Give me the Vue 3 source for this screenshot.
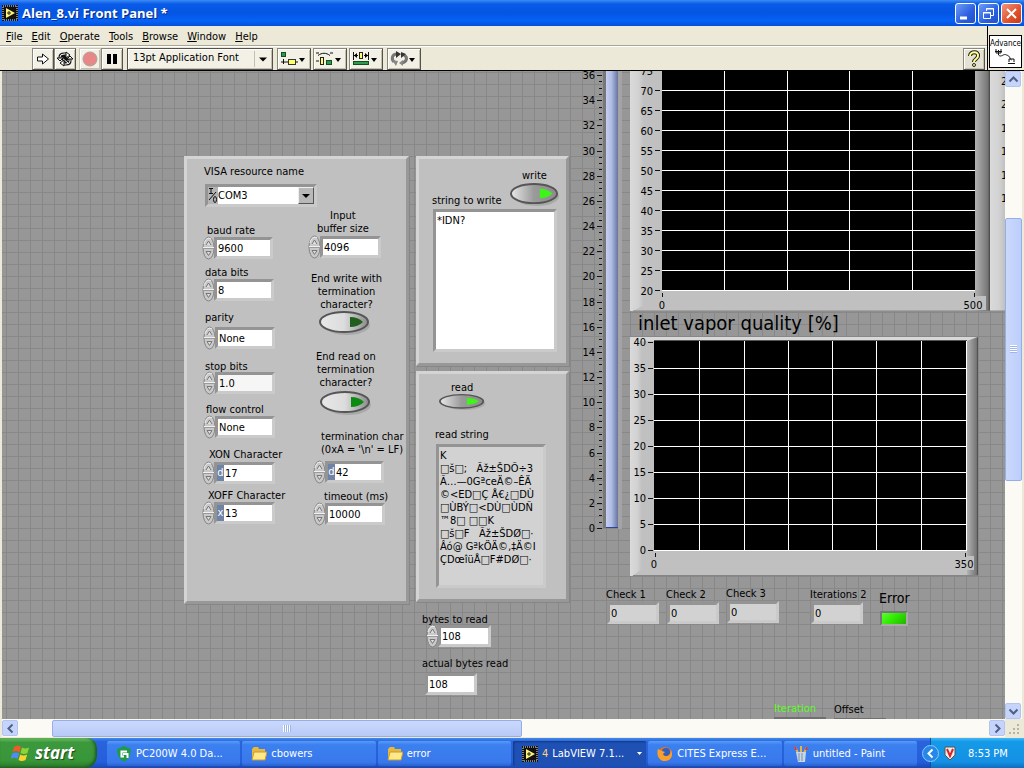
<script setup>
import { ref } from 'vue'

const menus = ['File', 'Edit', 'Operate', 'Tools', 'Browse', 'Window', 'Help']

/* Front panel coordinates of the canvas' visible top left corner */
const scroll = { x: 2, y: 71 }
const at = (o) => ({
  left: o.x - scroll.x + 'px',
  top: o.y - scroll.y + 'px',
  ...(o.w ? { width: o.w + 'px' } : {}),
  ...(o.h ? { height: o.h + 'px' } : {}),
})

const panels = [
  { x: 184, y: 156, w: 225, h: 448 },
  { x: 416, y: 156, w: 153, h: 210 },
  { x: 416, y: 371, w: 153, h: 231 },
]

const labels = [
  { for: 'visa', text: 'VISA resource name', x: 204, y: 165 },
  { for: 'buffer', text: 'Input\nbuffer size', x: 317, y: 209, center: true },
  { for: 'baud', text: 'baud rate', x: 207, y: 224 },
  { for: 'databits', text: 'data bits', x: 205, y: 266 },
  { for: 'endwrite', text: 'End write with\ntermination\ncharacter?', x: 311, y: 272, center: true },
  { for: 'parity', text: 'parity', x: 205, y: 311 },
  { for: 'endread', text: 'End read on\ntermination\ncharacter?', x: 316, y: 350, center: true },
  { for: 'stopbits', text: 'stop bits', x: 205, y: 360 },
  { for: 'flow', text: 'flow control', x: 206, y: 403 },
  { for: 'termchar', text: "termination char\n(0xA = '\\n' = LF)", x: 321, y: 430 },
  { for: 'xon', text: 'XON Character', x: 209, y: 448 },
  { for: 'xoff', text: 'XOFF Character', x: 208, y: 489 },
  { for: 'timeout', text: 'timeout (ms)', x: 324, y: 490 },
  { for: 'write', text: 'write', x: 522, y: 169 },
  { for: 'towrite', text: 'string to write', x: 432, y: 194 },
  { for: 'read', text: 'read', x: 451, y: 381 },
  { for: 'readstring', text: 'read string', x: 435, y: 428 },
  { for: 'bytes', text: 'bytes to read', x: 422, y: 613 },
  { for: 'actual', text: 'actual bytes read', x: 422, y: 657 },
  { for: 'check1', text: 'Check 1', x: 606, y: 588 },
  { for: 'check2', text: 'Check 2', x: 666, y: 588 },
  { for: 'check3', text: 'Check 3', x: 726, y: 587 },
  { for: 'iter2', text: 'Iterations 2', x: 810, y: 588 },
]

const controls = ref([
  { id: 'baud', value: '9600', x: 202, y: 236, w: 71, spin: true },
  { id: 'buffer', value: '4096', x: 308, y: 235, w: 73, spin: true },
  { id: 'databits', value: '8', x: 202, y: 278, w: 72, spin: true },
  { id: 'parity', value: 'None', x: 203, y: 326, w: 72, spin: true },
  { id: 'stopbits', value: '1.0', x: 203, y: 371, w: 72, spin: true },
  { id: 'flow', value: 'None', x: 203, y: 415, w: 72, spin: true },
  { id: 'xon', value: '17', x: 202, y: 461, w: 73, spin: true, radix: 'd' },
  { id: 'xoff', value: '13', x: 202, y: 501, w: 73, spin: true, radix: 'x' },
  { id: 'termchar', value: '42', x: 313, y: 460, w: 71, spin: true, radix: 'd' },
  { id: 'timeout', value: '10000', x: 313, y: 502, w: 72, spin: true },
  { id: 'bytes', value: '108', x: 426, y: 624, w: 65, spin: true },
  { id: 'actual', value: '108', x: 425, y: 672, w: 52 },
  { id: 'check1', value: '0', x: 607, y: 601, w: 52, out: true },
  { id: 'check2', value: '0', x: 667, y: 601, w: 52, out: true },
  { id: 'check3', value: '0', x: 727, y: 600, w: 52, out: true },
  { id: 'iter2', value: '0', x: 811, y: 601, w: 52, out: true },
])

const toggles = [
  { id: 'endwrite', x: 319, y: 311, w: 52, h: 24, light: '#1f5e1c', face: '#dcdcdc' },
  { id: 'endread', x: 320, y: 391, w: 52, h: 24, light: '#0d8a12', face: '#dcdcdc' },
  { id: 'write', x: 510, y: 183, w: 50, h: 23, light: '#3df516', face: '#9a9a9a' },
  { id: 'read', x: 439, y: 394, w: 47, h: 16, light: '#3df516', face: '#9a9a9a' },
]

const toWrite = ref('*IDN?')
const readString = [
  'K',
  '□š□;   Ãž±ŠDÕ÷3',
  'Ã…—0GªceÄ©–ÊÄ',
  '©<ED□Ç Å€¿□DÙ',
  '□ÙBÝ□<DÙ□ÙDÑ',
  '™8□ □□K',
  '□š□F   Ãž±ŠDØ□·',
  'Âó@ GªkÖÄ©‚‡Ä©I',
  'ÇDœîüÅ□F#DØ□·',
].join('\n')

/* Level scale: one major mark per two units, quarters in between */
const levelY = (v) => 457 - Math.round(v * 12.58)
const majors = Array.from({ length: 19 }, (_, i) => i * 2)
const minors = Array.from({ length: 73 }, (_, i) => i / 2).filter((v) => v % 2)

const chart1 = Array.from({ length: 12 }, (_, i) => ({ v: 20 + i * 5, y: 219 - i * 20 }))
const chart2 = Array.from({ length: 9 }, (_, i) => ({ v: i * 5, y: 213 - i * 26 }))
const edgeScale = ['2', '2', '1', '1', '1', '1']

const tasks = [
  { icon: 'pc', text: 'PC200W 4.0 Da...' },
  { icon: 'folder', text: 'cbowers' },
  { icon: 'folder', text: 'error' },
  { icon: 'labview', text: 'LabVIEW 7.1...', count: 4, active: true },
  { icon: 'firefox', text: 'CITES Express E...' },
  { icon: 'paint', text: 'untitled - Paint' },
]
</script>

<template>
  <div class="desktop">
    <header class="titlebar">
      <svg class="lv" width="16" height="16" viewBox="0 0 16 16">
        <rect width="16" height="16" fill="#111" />
        <rect x="1" y="1" width="14" height="14" fill="none" stroke="#eee" stroke-dasharray="1 1" />
        <path d="M4 3l9 5-9 5z" fill="#fff37a" /><path d="M5 8h4M7 6v4" stroke="#222" />
      </svg>
      <h1>Alen_8.vi Front Panel *</h1>
      <div class="winbtns">
        <button aria-label="Minimize"><svg width="19" height="19"><path d="M4 14h7" stroke="#fff" stroke-width="3" /></svg></button>
        <button aria-label="Restore"><svg width="19" height="19" fill="none" stroke="#fff"><path d="M7.500 7V4.500h7v7H12M7 5h8" /><path d="M4.500 8.500h7v6h-7zM4 9h8" /></svg></button>
        <button class="close" aria-label="Close"><svg width="19" height="19"><path d="M5 5l9 9M14 5l-9 9" stroke="#fff" stroke-width="2" /></svg></button>
      </div>
    </header>

    <div class="bars">
      <div class="barcol">
        <nav class="menubar">
          <button v-for="m in menus" :key="m"><u>{{ m[0] }}</u>{{ m.slice(1) }}</button>
        </nav>
        <div class="toolbar">
          <button class="tb" aria-label="Run"><svg width="16" height="16" viewBox="0 0 16 16"><path d="M2.500 6h5V3l6 5-6 5v-3h-5z" fill="#fff" stroke="#111" /></svg></button>
          <button class="tb" aria-label="Run continuously"><svg width="18" height="16" viewBox="0 0 18 16" fill="none"><path d="M4 8V6q0-3 4-3h3M14 8v2q0 3-4 3H7M6 7l6 5M6 4l6 5" stroke="#111" stroke-width="3" /><path d="M4 8V6q0-3 4-3h3M14 8v2q0 3-4 3H7M6 7l6 5" stroke="#fff" /><path d="M10 1l4 3-4 3zM8 9l-4 3 4 3zM1 7h6l-3 3zM11 8h6l-3-3z" fill="#fff" stroke="#111" /></svg></button>
          <button class="tb off gap3" aria-label="Abort"><svg width="18" height="18"><circle cx="9" cy="9" r="7" fill="#e88787" stroke="#a9a49a" /></svg></button>
          <button class="tb" aria-label="Pause"><svg width="16" height="16"><path d="M3 3h4v10H3zM9 3h4v10H9z" fill="#000" /></svg></button>
          <div class="fontsel gap4">
            <select aria-label="Text settings"><option>13pt Application Font</option></select>
            <svg width="16" height="16"><path d="M4 6.500h8L8 10.500z" fill="#000" /></svg>
          </div>
          <button class="tb wide" aria-label="Align objects"><svg width="30" height="16"><rect x="2.500" y="1.500" width="4" height="4" fill="#2c9a48" stroke="#174c22" /><path d="M4.500 8v5M2 11h5M7 11h3M16 11h3" stroke="#111" /><rect x="9.500" y="8.500" width="7" height="5" fill="#ffff6a" stroke="#333" /><path d="M20 7h6l-3 4z" /></svg></button>
          <button class="tb wide" aria-label="Distribute objects"><svg width="30" height="16"><path d="M3 4.500c4-3 8-3 12 0M1 10h3M1 2h3M15 2h3" fill="none" stroke="#111" /><rect x="5.500" y="6.500" width="3" height="7" fill="#ffff6a" stroke="#222" /><rect x="11.500" y="9.500" width="5" height="4" fill="#2c9a48" stroke="#174c22" /><path d="M20 7h6l-3 4z" /></svg></button>
          <button class="tb wide" aria-label="Resize objects"><svg width="30" height="16"><path d="M2.500 1v8M17.500 1v8M3 4.500h4M13 4.500h4" stroke="#111" /><path d="M3 4.500l3-2.500v5zM17 4.500L14 2v5z" /><rect x="8.500" y="1.500" width="3" height="6" fill="#ffff6a" stroke="#222" /><rect x="2.500" y="10.500" width="15" height="3" fill="#2c9a48" stroke="#174c22" /><path d="M20 7h6l-3 4z" /></svg></button>
          <button class="tb wide gap4" aria-label="Reorder"><svg width="30" height="16"><g fill="none" stroke="#777" stroke-width="3"><path d="M8 3C3 3 2 8 5 11M13 12c5-1 6-6 2-8" /></g><path d="M7 0l5 3-5 4zM12 1l5 2-5 4z" fill="#333" /><path d="M3 9l6 1-2 5zM14 9v6l-4-3z" fill="#888" /><path d="M20 7h6l-3 4z" /></svg></button>
          <button class="tb help" aria-label="Context help"><svg width="16" height="18" viewBox="0 0 16 18" fill="none"><path d="M4 6c0-5 9-5 8 0 0 3-4 3-4 6" stroke="#222" stroke-width="4" /><path d="M4 6c0-5 9-5 8 0 0 3-4 3-4 6" stroke="#ffff8c" stroke-width="2" /><circle cx="8" cy="15" r="1.500" fill="#ffff8c" stroke="#222" /></svg></button>
        </div>
      </div>
      <div class="viicon">
        <svg width="33" height="33" viewBox="0 0 33 33">
          <rect x=".5" y=".5" width="32" height="32" fill="#fff" stroke="#000" />
          <text x="1" y="11" class="tiny">Advance</text>
          <g fill="none" stroke="#111"><path d="M6 16.500h7M7 14v4h5v-4M9.500 15v5c3 3 5-2 8 0 4 1 3 4 5 5M19 28.500h7M20 27v-3h5v3" /></g>
        </svg>
      </div>
    </div>

    <main class="work">
      <div class="canvas">
        <div v-for="(p, i) in panels" :key="i" class="panel" :style="at(p)"></div>

        <label v-for="l in labels" :key="l.for" :for="l.for" class="lbl" :class="{ center: l.center }" :style="at(l)">{{ l.text }}</label>

        <div class="visa recess" :style="at({ x: 205, y: 184, w: 112, h: 23 })">
          <svg width="10" height="17" viewBox="0 0 10 17"><path d="M1 1.500h4M3 1.500v5M1 6.500h4M1 13L8 5" stroke="#111" fill="none" /><ellipse cx="7" cy="12.500" rx="1.500" ry="3" stroke="#111" fill="none" /></svg>
          <select id="visa"><option>COM3</option></select>
          <span class="drop"><svg width="14" height="14"><path d="M3 5h8l-4 4z" /></svg></span>
        </div>

        <div v-for="c in controls" :key="c.id" class="ctl" :style="at({ x: c.x, y: c.y, w: c.w })">
          <button v-if="c.spin" class="spin" :aria-label="'Step ' + c.id">
            <svg width="13" height="24" viewBox="0 0 13 24">
              <ellipse cx="6.500" cy="12" rx="5.500" ry="11" fill="#c9c9c9" stroke="#848484" />
              <path d="M2 8C3 3 6 1 9 3" stroke="#f2f2f2" fill="none" />
              <path d="M1 11.500h11" stroke="#f0f0f0" /><path d="M1 12.500h11" stroke="#9a9a9a" />
              <path d="M4 9l2.500-4 2.500 4" fill="#ddd" stroke="#777" /><path d="M4 15.500h5l-2.500 4z" fill="#ddd" stroke="#777" />
            </svg>
          </button>
          <div class="recess num" :class="{ out: c.out, plain: !c.spin, soft: c.id === 'stopbits' }">
            <span v-if="c.radix" class="radix">{{ c.radix }}</span>
            <input :id="c.id" v-model="c.value" :readonly="c.out" />
          </div>
        </div>

        <button v-for="t in toggles" :id="t.id" :key="t.id" class="toggle" :style="at(t)">
          <svg width="100%" height="100%" viewBox="0 0 52 24" preserveAspectRatio="none">
            <defs><linearGradient :id="'g' + t.id" x2="1"><stop offset="0" stop-color="#e8e8e8" /><stop offset=".5" :stop-color="t.face" /><stop offset="1" stop-color="#8c8c8c" /></linearGradient></defs>
            <ellipse cx="28" cy="14" rx="23" ry="10" fill="#999" opacity=".6" />
            <ellipse cx="25" cy="11" rx="24" ry="10" :fill="'url(#g' + t.id + ')'" stroke="#555" stroke-width="2" />
            <path d="M31 6q8 0 13 5-5 5-13 5z" :fill="t.light" />
          </svg>
        </button>

        <textarea id="towrite" v-model="toWrite" class="recess string" :style="at({ x: 433, y: 209, w: 124, h: 143 })"></textarea>
        <textarea id="readstring" class="recess string out" readonly :value="readString" :style="at({ x: 436, y: 444, w: 110, h: 144 })"></textarea>

        <svg class="item" width="50" height="466" :style="at({ x: 574, y: 71 })">
          <defs><linearGradient id="tube" x2="1"><stop offset="0" stop-color="#c5ceee" /><stop offset=".45" stop-color="#b0bce4" /><stop offset="1" stop-color="#66749e" /></linearGradient></defs>
          <rect x="29" y="0" width="3" height="457" fill="#777" /><rect x="44" y="0" width="4" height="458" fill="#a4a4a4" />
          <rect x="32" y="0" width="12" height="457" fill="url(#tube)" /><rect x="32" y="456" width="12" height="1" fill="#2b449c" />
          <g stroke="#111"><path v-for="v in majors" :key="v" :d="`M23 ${levelY(v)}.5h5`" /><path v-for="v in minors" :key="v" :d="`M25 ${levelY(v)}.5h3`" /></g>
          <text v-for="v in majors" :key="v" x="21" :y="levelY(v) + 4" text-anchor="end">{{ v }}</text>
        </svg>

        <svg class="item" width="375" height="241" :style="at({ x: 630, y: 71 })">
          <defs>
            <linearGradient id="lite" x2="1"><stop offset="0" stop-color="#dadada" /><stop offset=".6" stop-color="#d2d2d2" /><stop offset="1" stop-color="#c0c0c0" /></linearGradient>
            <linearGradient id="dim" x2="1"><stop offset="0" stop-color="#b2b2b2" /><stop offset=".85" stop-color="#777" /><stop offset="1" stop-color="#444" /></linearGradient>
          </defs>
          <rect width="360" height="240" fill="#c0c0c0" /><path d="M0 0h14v234L3 240H0z" fill="url(#lite)" />
          <rect x="345" width="15" height="240" fill="url(#dim)" /><rect x="330" y="225" width="26" height="14" fill="#c0c0c0" />
          <rect x="360" width="15" height="240" fill="url(#lite)" /><path d="M3 240h372" stroke="#858585" />
          <rect x="32" width="313" height="219" fill="#000" />
          <g stroke="#fff"><path v-for="t in chart1" :key="t.v" :d="`M32 ${t.y}.5h313`" /><path v-for="x in [94, 157, 219, 282]" :key="x" :d="`M${x}.5 0v219`" /></g>
          <path v-for="t in chart1" :key="t.v" :d="`M25 ${t.y}.5h5`" stroke="#111" />
          <text v-for="t in chart1" :key="t.v" x="23" :y="t.y + 5" text-anchor="end">{{ t.v }}</text>
          <path d="M32.500 222v4M344.500 222v4" stroke="#111" />
          <text x="32" y="238" text-anchor="middle">0</text><text x="343" y="238" text-anchor="middle">500</text>
          <text v-for="(e, i) in edgeScale" :key="i" x="371" :y="14 + Math.round(i * 23.4)">{{ e }}</text>
        </svg>

        <h2 :style="at({ x: 638, y: 311 })">inlet vapor quality [%]</h2>

        <svg class="item" width="349" height="240" :style="at({ x: 630, y: 337 })">
          <rect width="348" height="239" fill="#c0c0c0" /><path d="M0 0h12v232L2 239H0z" fill="url(#lite)" /><path d="M0 0h346l-8 4H0z" fill="#d8d8d8" />
          <path d="M337 4l11-4v239h-11z" fill="url(#dim)" /><path d="M322 219h22v14h-22z" fill="#c0c0c0" /><path d="M3 238.500h345" stroke="#858585" />
          <path d="M24 3.500h313" stroke="#555" /><rect x="24" y="4" width="313" height="209" fill="#000" />
          <g stroke="#fff"><path v-for="t in chart2.slice(0, 8)" :key="t.v" :d="`M24 ${t.y}.5h313`" /><path v-for="x in [69, 114, 158, 202, 246, 291, 336]" :key="x" :d="`M${x}.5 4v209`" /></g>
          <path v-for="t in chart2" :key="t.v" :d="`M18 ${t.y}.5h5`" stroke="#111" />
          <text v-for="t in chart2" :key="t.v" x="16" :y="t.y + 4" text-anchor="end">{{ t.v }}</text>
          <path d="M25.500 216v4M335.500 216v4" stroke="#111" />
          <text x="24" y="231" text-anchor="middle">0</text><text x="334" y="231" text-anchor="middle">350</text>
        </svg>

        <div class="lbl big" :style="at({ x: 879, y: 589 })">Error</div>
        <div class="led" :style="at({ x: 880, y: 611, w: 28, h: 15 })"></div>
        <div class="lbl cut green" :style="at({ x: 774, y: 702, w: 52 })">Iteration</div>
        <div class="lbl cut" :style="at({ x: 834, y: 703, w: 52 })">Offset</div>
      </div>

      <div class="vbar">
        <button class="sb" aria-label="Scroll up"><svg width="15" height="15"><path d="M3.500 9.500l4-4 4 4" /></svg></button>
        <i class="v1"></i><div class="thumb"><span></span></div><i class="v2"></i>
        <button class="sb" aria-label="Scroll down"><svg width="15" height="15"><path d="M3.500 5.500l4 4 4-4" /></svg></button>
      </div>
      <div class="hbar">
        <button class="sb" aria-label="Scroll left"><svg width="15" height="15"><path d="M9.500 3.500l-4 4 4 4" /></svg></button>
        <i class="h1"></i><div class="thumb"><span></span></div><i class="h2"></i>
        <button class="sb" aria-label="Scroll right"><svg width="15" height="15"><path d="M5.500 3.500l4 4-4 4" /></svg></button>
      </div>
      <div class="corner"><svg width="17" height="17"><path d="M12 5h2v2h-2zM12 9h2v2h-2zM12 13h2v2h-2zM8 9h2v2H8zM8 13h2v2H8zM4 13h2v2H4z" fill="#b8b4a2" /></svg></div>
    </main>

    <footer class="taskbar">
      <button class="start">
        <svg width="20" height="20" viewBox="0 0 20 20"><path d="M3 4q4-3 7 0L8.500 9.500q-3-2.500-7-.5z" fill="#f05a28" /><path d="M11 4.500q3 2 7 0L16.500 10q-4 2-7 0z" fill="#8cd43a" /><path d="M1.200 10.500q4-2 7 0L6.500 16q-3-2.500-7 0z" fill="#4f8df5" /><path d="M9.200 11.500q3 2 7 0L14.500 17q-4 2-7 0z" fill="#fcd22e" /></svg>
        <span>start</span>
      </button>
      <div class="tasks">
        <button v-for="(t, i) in tasks" :key="i" class="task" :class="{ active: t.active }">
          <svg v-if="t.icon === 'pc'" width="16" height="16"><path d="M8 0l7 3c0 6-2 10-7 13C3 13 1 9 1 3z" fill="#1f9a4c" /><path d="M11 5.500H5.500v5H8M7 8h4.500v4" fill="none" stroke="#fff" stroke-width="2" /></svg>
          <svg v-else-if="t.icon === 'folder'" width="16" height="16"><path d="M1 3l2-2h4l1 2h6v10H1z" fill="#e8b83c" /><path d="M3 6h13l-2 8H1z" fill="#ffe88a" stroke="#c89a28" /></svg>
          <svg v-else-if="t.icon === 'labview'" width="16" height="16"><rect width="16" height="16" fill="#111" /><rect x="1" y="1" width="14" height="14" fill="none" stroke="#eee" stroke-dasharray="1 1" /><path d="M4 3l9 5-9 5z" fill="#fff37a" /><path d="M5 8h4M7 6v4" stroke="#222" /></svg>
          <svg v-else-if="t.icon === 'firefox'" width="16" height="16"><circle cx="8" cy="8" r="7" fill="#e8701a" /><circle cx="9" cy="6" r="4" fill="#2f5fc0" /><path d="M1 3c1 1 3 1 4 2l3 1-2 2c1 3 5 3 7 0 1-2 1-4 0-5 4 4 2 12-5 12C2 15-1 9 1 3z" fill="#f9a02a" /></svg>
          <svg v-else width="16" height="16"><path d="M5 7L2 1M8 7V0M11 7l3-6" stroke="#e6b24a" stroke-width="2" /><path d="M2 1l1 3M14 1l-1 3" stroke="#d33" stroke-width="2" /><path d="M3 6h10l-1 10H5z" fill="#c9d6e6" /><path d="M6 7v8M9 7v8" stroke="#7c8fa6" /></svg>
          <b v-if="t.count">{{ t.count }}</b>
          <span>{{ t.text }}</span>
          <svg v-if="t.count" class="caret" width="7" height="5"><path d="M1 1h5L3.500 4z" fill="#fff" /></svg>
        </button>
      </div>
      <div class="tray">
        <button class="chev" aria-label="Show hidden icons"><svg width="17" height="17"><circle cx="8.500" cy="8.500" r="8" fill="#2587e8" stroke="#8cc8ff" /><path d="M10.500 4.500l-4 4 4 4" fill="none" stroke="#fff" stroke-width="2" /></svg></button>
        <svg width="12" height="15"><path d="M1 1h10v8l-5 5-5-5z" fill="#eee" stroke="#555" /><path d="M3 3l3 7 3-7" fill="none" stroke="#d22" stroke-width="2" /></svg>
        <time>8:53 PM</time>
      </div>
    </footer>
  </div>
</template>

<style>
body { margin: 0; overflow: hidden; }
</style>

<style scoped>
.desktop { height: 100vh; display: flex; flex-direction: column; background: #ece9d8; color: #000; font: 11px/13px "DejaVu Sans Condensed", "DejaVu Sans", "Noto Sans", sans-serif; }
button, input, select, textarea { font: inherit; color: inherit; margin: 0; padding: 0; border: 0; background: none; border-radius: 0; outline: 0; min-width: 0; }
svg { display: block; flex: none; }
text { font-size: 11px; fill: #000; }
.item { overflow: visible; }
.titlebar { flex: none; height: 26px; display: flex; align-items: center; gap: 4px; padding: 0 2px; background: linear-gradient(#3c8cf5, #0a5ce8 15%, #0455e2 50%, #0562f8 80%, #0450d8); color: #fff; }
h1 { margin: 0; flex: 1; font: bold 13px/18px "Open Sans", sans-serif; text-shadow: 1px 1px #0a2a80; }
.winbtns { display: flex; gap: 2px; }
.winbtns button { width: 21px; height: 21px; border: 1px solid #fff; border-radius: 3px; background: linear-gradient(135deg, #6f9cf5, #2a5fe0 60%, #2450c8); }
.winbtns .close { background: linear-gradient(135deg, #f0977c, #e0502c 60%, #c43c14); }
.bars { flex: none; display: flex; height: 44px; border-bottom: 1px solid #000; }
.barcol { flex: 1; min-width: 0; border-right: 1px solid #000; }
.menubar { height: 20px; padding: 1px 0 0 6px; display: flex; gap: 9px; border-bottom: 1px solid #a8a595; box-sizing: border-box; }
.menubar button { line-height: 17px; height: 18px; padding-top: 1px; }
.toolbar { height: 24px; box-sizing: border-box; border-top: 1px solid #fff; display: flex; align-items: center; padding: 0 2px 0 32px; }
.tb { width: 22px; height: 22px; box-sizing: border-box; display: flex; align-items: center; justify-content: center; border: 1px solid #55524a; border-top-color: #8a877c; border-left-color: #8a877c; background: #f3f1e6; box-shadow: inset 1px 1px #fff, inset -1px -1px #c4c0b0; }
.off { border-color: #c9c5b5; }
.gap3 { margin-left: 3px; }
.gap4 { margin-left: 4px; }
.tb.wide { width: 34px; margin-left: 2px; }
.tb.wide.gap4 { margin-left: 4px; }
.help { margin-left: auto; background: #e5e2d4; }
.fontsel { position: relative; width: 146px; height: 22px; box-sizing: border-box; border: 1px solid #55524a; background: #f3f1e6; box-shadow: inset 1px 1px #fff, inset -1px -1px #c4c0b0; margin-right: 2px; }
.fontsel select { appearance: none; width: 100%; height: 18px; padding-left: 5px; }
.fontsel svg { position: absolute; right: 1px; top: 2px; border-left: 1px solid #c4c0b0; pointer-events: none; }
.viicon { width: 36px; display: flex; align-items: center; padding: 7px 0 0 1px; box-sizing: border-box; }
.tiny { font-size: 8px; }
.work { flex: 1; min-height: 0; display: grid; grid-template-columns: 1fr 17px; grid-template-rows: 1fr 18px; padding: 0 2px 1px; }
.canvas { position: relative; overflow: hidden; background-color: #979797; background-image: linear-gradient(90deg, #888 1px, transparent 1px), linear-gradient(#888 1px, transparent 1px); background-size: 12px 12px; background-position: 4px 1px; }
.canvas > * { position: absolute; box-sizing: border-box; }
.panel { background: #c0c0c0; border: 3px solid; border-color: #d4d4d4 #989898 #989898 #d4d4d4; box-shadow: 1px 1px #868686; }
.lbl { white-space: pre; line-height: 13px; }
.center { text-align: center; }
.big { font-size: 14px; line-height: 18px; }
.cut { border-bottom: 2px solid #707070; height: 17px; }
.green { color: #5aff1e; }
h2 { margin: 0; font-size: 20px; font-weight: 400; line-height: 24px; white-space: nowrap; }
.recess { box-sizing: border-box; border: 3px solid; border-color: #949494 #cacaca #cacaca #949494; background: #fff; border-radius: 0; }
.visa { display: flex; background: #b4b4b4; }
.visa select { appearance: none; flex: 1; background: #fff; }
.drop { width: 16px; background: #b8b8b8; border: 1px solid #eee; border-right-color: #555; border-bottom-color: #555; box-sizing: border-box; pointer-events: none; display: flex; align-items: center; justify-content: center; }
.ctl { display: flex; align-items: flex-start; }
.spin { width: 13px; height: 24px; flex: none; }
.num { flex: 1; min-width: 0; display: flex; height: 22px; margin-top: 1px; margin-left: -1px; }
.num.plain { margin-left: 0; }
.num input { flex: 1; width: 0; height: 16px; padding-left: 1px; }
.radix { width: 7px; background: #6e83a5; color: #fff; text-align: center; line-height: 16px; }
.out { background: #d2d2d2; }
.num.soft { background: #f6f6f6; }
.string { background: #fff; resize: none; white-space: pre; overflow: hidden; line-height: 13px; padding: 2px 1px; }
.string.out { background: #d2d2d2; }
.led { border: 2px solid; border-color: #777 #aaa #aaa #777; background: linear-gradient(135deg, #5aff2e, #2fe800 50%, #22b400); }
.vbar, .hbar { display: flex; background: #fbfaf4; }
.vbar { flex-direction: column; }
.hbar { padding-top: 1px; align-items: stretch; }
.sb { width: 16px; height: 16px; flex: none; border: 1px solid #b4c4f0; border-radius: 2px; background: #c6d4fc; box-sizing: border-box; }
.sb path { fill: none; stroke: #4d6185; stroke-width: 2; }
.thumb { display: flex; align-items: center; justify-content: center; background: linear-gradient(90deg, #cbd8fd, #bccefa); border: 1px solid #95aee8; border-radius: 2px; box-sizing: border-box; }
.vbar .thumb { flex: 262; }
.hbar .thumb { flex: 470; background: linear-gradient(#cbd8fd, #b8caf6); }
.vbar .thumb span { width: 7px; height: 8px; background: repeating-linear-gradient(#fff 0 1px, #9db4ec 1px 2px); }
.hbar .thumb span { width: 8px; height: 7px; background: repeating-linear-gradient(90deg, #fff 0 1px, #9db4ec 1px 2px); }
.v1 { flex: 131; } .v2 { flex: 223; } .h1 { flex: 34; } .h2 { flex: 468; }
.taskbar { flex: none; height: 30px; display: flex; color: #fff; background: linear-gradient(#3f8bf0, #2a63dc 12%, #245edb 80%, #1a48b4); }
.start { width: 97px; display: flex; align-items: center; gap: 4px; padding-left: 11px; box-sizing: border-box; border-radius: 0 10px 12px 0; background: linear-gradient(#6cc062, #3c983c 15%, #389638 75%, #2a7a2c); box-shadow: inset -2px -1px 3px #1e5a20; }
.start span { font: italic bold 17px/22px "Open Sans", sans-serif; text-shadow: 1px 1px 1px #1c4a1c; }
.tasks { flex: 1; min-width: 0; display: flex; gap: 2px; padding: 3px 13px 2px 10px; }
.task { flex: 1; min-width: 0; display: flex; align-items: center; gap: 4px; padding-left: 9px; border-radius: 2px; background: linear-gradient(#5a9cf8, #3c80f0 15%, #3878ec 85%, #2c62cc); white-space: nowrap; overflow: hidden; }
.task.active { background: #1f50b4; box-shadow: inset 1px 1px 2px #123880; }
.task b { font-weight: 400; color: #ffd27a; }
.caret { margin-left: auto; margin-right: 3px; }
.tray { width: 94px; display: flex; align-items: center; gap: 5px; box-sizing: border-box; background: linear-gradient(#45b8f8, #149ae8 12%, #1590e4 80%, #0f6cc0); border-left: 1px solid #0c50a0; }
.chev { margin-left: -9px; }
.tray time { margin-left: 7px; white-space: nowrap; }
</style>
